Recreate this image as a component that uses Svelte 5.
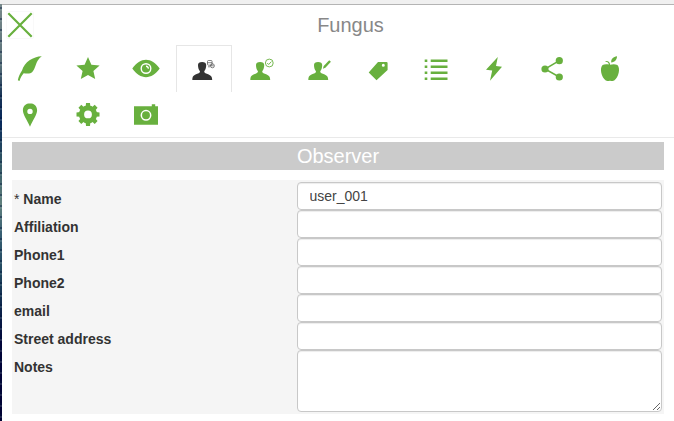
<script>
  const fields = ['Affiliation', 'Phone1', 'Phone2', 'email', 'Street address'];
  const teeth = [0, 45, 90, 135, 180, 225, 270, 315];
  const tabs = ['feather', 'star', 'eye', 'observer', 'verified', 'edit', 'tag', 'list', 'bolt', 'share', 'apple', 'pin', 'gear', 'camera'];
</script>

{#snippet person()}
  <path d="M16.300 35c0-3 .7-4.600 3.200-5.600 2.600-1 4.500-1.300 4.500-3.200-1.400-1.500-2-3.600-2-6.200 0-2.300 1.400-3.100 4.100-3.100s4.100.8 4.100 3.100c0 2.600-.6 4.700-2 6.200 0 1.900 1.900 2.200 4.500 3.200 2.500 1 3.500 2.600 3.500 5.600z" />
{/snippet}

<div class="screen">
  <div class="photo"></div>
  <main>
    <header>
      <button class="close" aria-label="Close">
        <svg width="26" height="26" viewBox="0 0 26 26"><path d="M1.300 1.300l23.400 23.400M24.700 1.300L1.300 24.700" /></svg>
      </button>
      <h1>Fungus</h1>
    </header>

    <nav>
      {#each tabs as tab}
        <a class:active={tab === 'observer'} href="#{tab}" aria-label={tab}>
          <svg width="56" height="47" viewBox="0 0 56 47">
            {#if tab === 'feather'}
              <path d="M39.800 11.200C31 11.500 22.500 17 20 25.500c-1.900 2.700-3.400 6-4.200 9.800l1.700.7c.9-3 2.200-5.700 4.200-7.700 2.500.2 5 .4 7.300-.3 4-2.700 4.300-8.700 6.800-12.600 1.200-1.700 2.500-3.200 4-4.200z" />
            {:else if tab === 'star'}
              <path d="M28 12l3.400 7.700 8.200.8-6.200 5.500 1.800 8.100-7.200-4.200-7.200 4.200 1.800-8.100-6.200-5.500 8.200-.8z" />
            {:else if tab === 'eye'}
              <path d="M14.300 23.500c8-11.700 19.400-11.700 27.400 0-8 11.500-19.400 11.500-27.400 0z" />
              <circle cx="28" cy="23.500" r="4.800" fill="none" stroke="#fff" stroke-width="1.400" />
              <path d="M28 21.300a2.200 2.200 0 012.300 2.300" fill="none" stroke="#fff" stroke-width="1.500" />
            {:else if tab === 'observer'}
              {@render person()}
              <g fill="none" stroke="currentColor" stroke-width=".6">
                <rect x="31.500" y="15.500" width="4.600" height="4.700" rx="1" />
                <path d="M31.500 17.700h4.600M32 21.800h2" />
                <circle cx="36.400" cy="20.800" r="2" />
                <path d="M35 20.800h2.800" />
              </g>
            {:else if tab === 'verified'}
              {@render person()}
              <circle cx="35.300" cy="18" r="3.900" fill="none" stroke="currentColor" stroke-width=".9" />
              <path d="M33.200 18l1.500 1.500 2.700-2.900" fill="none" stroke="currentColor" stroke-width=".9" />
            {:else if tab === 'edit'}
              {@render person()}
              <path d="M37.200 15.200l1.700 1.500-5.500 6-2.500 1 .8-2.700z" />
            {:else if tab === 'tag'}
              <path fill-rule="evenodd" d="M28 17h8.500q1.100 0 1.100 1.100V25L26.500 35.200 18.700 27.500zM33.300 18.800a1.500 1.500 0 100 3 1.500 1.500 0 000-3z" />
            {:else if tab === 'list'}
              {#each [14.500, 20.500, 26.500, 32.500] as y}
                <rect x="16.700" {y} width="2.600" height="2.500" />
                <rect x="22.700" {y} width="16.800" height="2.500" />
              {/each}
            {:else if tab === 'bolt'}
              <path d="M31.800 12L20 24.800l6.200.8-2.200 10.200L36 21.700l-6-.6z" />
            {:else if tab === 'share'}
              <path d="M35.300 15.700L21 24l14.300 8" fill="none" stroke="currentColor" stroke-width="1.500" />
              <circle cx="21" cy="24" r="3.600" />
              <circle cx="35.300" cy="15.700" r="3.600" />
              <circle cx="35.300" cy="32" r="3.600" />
            {:else if tab === 'apple'}
              <path d="M23.500 16c2.700-.4 4.400.8 4.700 3.800 2.300-.8 5.300-.7 7.200.2 3.300 3.200 1.300 12.500-3.200 15.500-1.500.9-2.600.2-4.200.2s-2.700.7-4.200-.2c-4.500-3-6.500-12.300-3.200-15.500 1.600-.8 4.100-1 6.200-.4-.3-2-1.300-2.900-3.300-2.800z" />
              <path d="M29.200 17.400c-.4-3.500 2.200-5.800 5.800-6.200 0 3.300-2.100 6-5.800 6.200z" />
            {:else if tab === 'pin'}
              <path fill-rule="evenodd" d="M28 12.300c-4.200 0-7.100 3-7.100 7 0 4.700 4.300 9.700 7.100 16.500 2.800-6.800 7.100-11.800 7.100-16.500 0-4-2.900-7-7.100-7zM28 17.700a2.700 2.700 0 110 5.400 2.700 2.700 0 010-5.400z" />
            {:else if tab === 'gear'}
              <circle cx="28" cy="23.400" r="6.500" fill="none" stroke="currentColor" stroke-width="5.200" />
              {#each teeth as angle}
                <path d="M25.700 15.500l.3-3.600h4l.3 3.600z" transform="rotate({angle} 28 23.400)" />
              {/each}
            {:else}
              <path d="M16 15.200h17.800V13.200h3.400v2H40v18.500H16z" />
              <circle cx="28" cy="24.300" r="4.700" fill="none" stroke="#fff" stroke-width="1.500" />
            {/if}
          </svg>
        </a>
      {/each}
    </nav>

    <section>
      <h2>Observer</h2>
      <form>
        <label><span><i>*</i> Name</span><input type="text" value="user_001" /></label>
        {#each fields as field}
          <label><span>{field}</span><input type="text" /></label>
        {/each}
        <label><span>Notes</span><textarea></textarea></label>
      </form>
    </section>
  </main>
</div>

<style>
  :global(body) { overflow: hidden; }
  * { box-sizing: border-box; }
  .screen {
    display: flex;
    height: 421px;
    border-top: 4px solid #f0f0f0;
    background: #fff;
    color: #333;
    font-family: "Liberation Sans", Arial, sans-serif;
    font-size: 14px;
  }
  .photo {
    width: 2px;
    flex: none;
    background:
      repeating-linear-gradient(#0000 0 3px, #00133c66 3px 5px, #9db7b833 5px 7px, #0000 7px 11px),
      linear-gradient(#78898b, #586f78 15%, #183456 22%, #07275b 28%, #2d5262 37%, #62817e 48%, #385f73 55%, #20465e 65%, #0b2149 74%, #02063a 81%, #010133);
  }
  main { flex: 1; min-width: 0; border-top: 1px solid #b4b4b4; }
  header { display: flex; height: 40px; padding-left: 5px; }
  .close {
    width: 26px;
    height: 26px;
    margin-top: 7px;
    padding: 0;
    border: 0;
    background: #fff;
    box-shadow: 0 0 1px #ddd;
  }
  .close svg { display: block; }
  .close path { stroke: #68b03e; stroke-width: 2.2; }
  h1 {
    flex: 1;
    margin: 8px 6px 0 0;
    color: #888;
    font-size: 20px;
    font-weight: 400;
    line-height: 24px;
    text-align: center;
  }
  nav {
    display: flex;
    flex-wrap: wrap;
    align-content: flex-start;
    gap: 0 2px;
    height: 93px;
    padding-right: 26px;
    border-bottom: 1px solid #e9e9e9;
  }
  nav a { display: block; width: 56px; height: 47px; margin-bottom: -1px; color: #68b03e; }
  nav a.active { color: #333; box-shadow: inset 1px 1px #e6e6e6, inset -1px 0 #e6e6e6; }
  nav svg { display: block; fill: currentColor; }
  section { padding: 4px 10px 0; }
  h2 {
    height: 28px;
    margin: 0 0 10px;
    background: #cbcbcb;
    color: #fff;
    font-size: 20px;
    font-weight: 400;
    line-height: 28px;
    text-align: center;
  }
  form { height: 234px; padding: 2px; background: #f5f5f5; }
  label { display: flex; align-items: flex-start; }
  span { width: 283px; padding-top: 7px; font-weight: 700; line-height: 20px; }
  i { font-style: normal; font-weight: 400; }
  input, textarea {
    display: block;
    width: 365px;
    height: 28px;
    margin: 0;
    padding: 0 12px;
    border: 1px solid #c8c8c8;
    border-radius: 4px;
    background: #fff;
    color: #444;
    font: inherit;
    outline: 0;
    box-shadow: inset 0 1px 1px #00000013;
  }
  input { padding-left: 11.500px; }
  textarea { height: 62px; }
</style>
